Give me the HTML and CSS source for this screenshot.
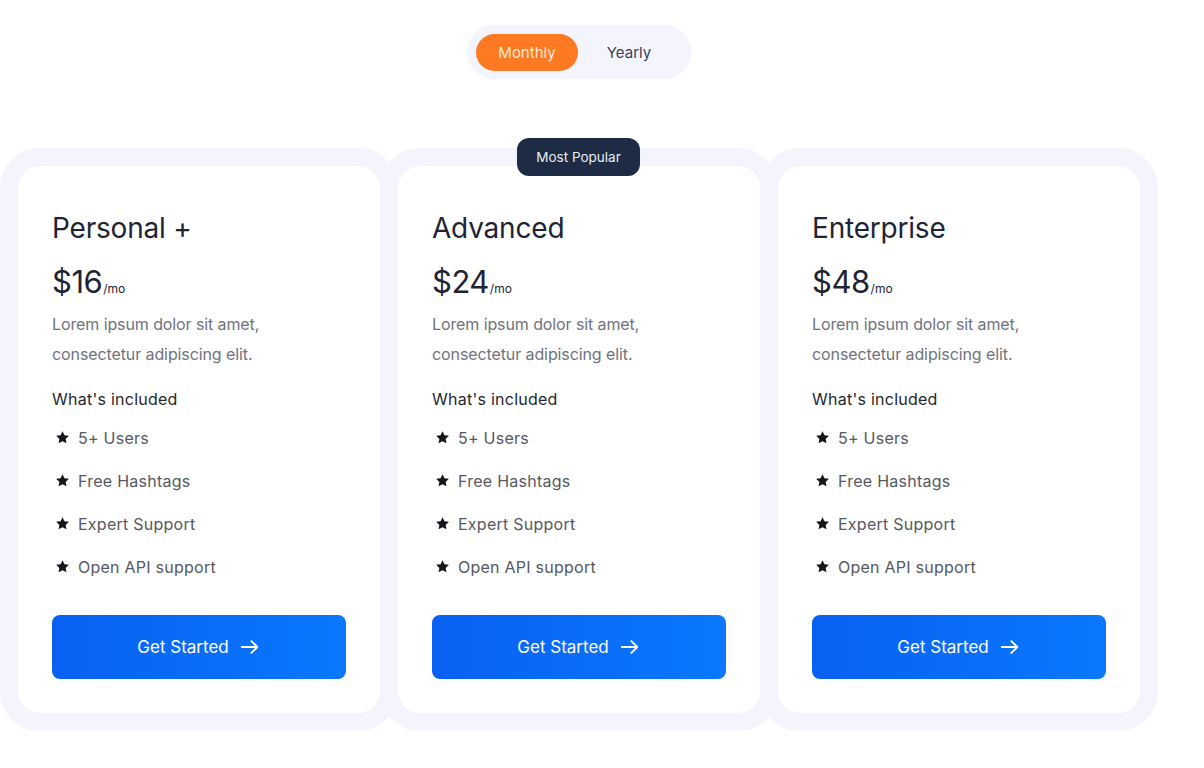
FILE: index.html
```html
<!DOCTYPE html>
<html>
<head>
<meta charset="utf-8">
<link rel="stylesheet" href="styles.css">
</head>
<body>
<div class="page">
  <div class="toggle-row">
    <div class="toggle">
      <button class="toggle-btn active">Monthly</button>
      <button class="toggle-btn">Yearly</button>
    </div>
  </div>
  <div class="cards">
    <div class="card">
      <h2 class="plan">Personal +</h2>
      <div class="price"><span class="amount">$16</span><span class="per">/mo</span></div>
      <p class="desc">Lorem ipsum dolor sit amet, consectetur adipiscing elit.</p>
      <h3 class="incl">What's included</h3>
      <ul class="features">
        <li><svg class="star" viewBox="0 0 24 24"><path d="M12 1.8l3.1 6.6 7.1.9-5.2 4.9 1.4 7.1L12 17.8l-6.4 3.5 1.4-7.1-5.2-4.9 7.1-.9z"/></svg>5+ Users</li>
        <li><svg class="star" viewBox="0 0 24 24"><path d="M12 1.8l3.1 6.6 7.1.9-5.2 4.9 1.4 7.1L12 17.8l-6.4 3.5 1.4-7.1-5.2-4.9 7.1-.9z"/></svg>Free Hashtags</li>
        <li><svg class="star" viewBox="0 0 24 24"><path d="M12 1.8l3.1 6.6 7.1.9-5.2 4.9 1.4 7.1L12 17.8l-6.4 3.5 1.4-7.1-5.2-4.9 7.1-.9z"/></svg>Expert Support</li>
        <li><svg class="star" viewBox="0 0 24 24"><path d="M12 1.8l3.1 6.6 7.1.9-5.2 4.9 1.4 7.1L12 17.8l-6.4 3.5 1.4-7.1-5.2-4.9 7.1-.9z"/></svg>Open API support</li>
      </ul>
      <button class="cta">Get Started<svg class="arrow" viewBox="0 0 24 24"><path d="M3 12h17M13.5 5.5L20 12l-6.5 6.5"/></svg></button>
    </div>
    <div class="card">
      <div class="badge">Most Popular</div>
      <h2 class="plan">Advanced</h2>
      <div class="price"><span class="amount">$24</span><span class="per">/mo</span></div>
      <p class="desc">Lorem ipsum dolor sit amet, consectetur adipiscing elit.</p>
      <h3 class="incl">What's included</h3>
      <ul class="features">
        <li><svg class="star" viewBox="0 0 24 24"><path d="M12 1.8l3.1 6.6 7.1.9-5.2 4.9 1.4 7.1L12 17.8l-6.4 3.5 1.4-7.1-5.2-4.9 7.1-.9z"/></svg>5+ Users</li>
        <li><svg class="star" viewBox="0 0 24 24"><path d="M12 1.8l3.1 6.6 7.1.9-5.2 4.9 1.4 7.1L12 17.8l-6.4 3.5 1.4-7.1-5.2-4.9 7.1-.9z"/></svg>Free Hashtags</li>
        <li><svg class="star" viewBox="0 0 24 24"><path d="M12 1.8l3.1 6.6 7.1.9-5.2 4.9 1.4 7.1L12 17.8l-6.4 3.5 1.4-7.1-5.2-4.9 7.1-.9z"/></svg>Expert Support</li>
        <li><svg class="star" viewBox="0 0 24 24"><path d="M12 1.8l3.1 6.6 7.1.9-5.2 4.9 1.4 7.1L12 17.8l-6.4 3.5 1.4-7.1-5.2-4.9 7.1-.9z"/></svg>Open API support</li>
      </ul>
      <button class="cta">Get Started<svg class="arrow" viewBox="0 0 24 24"><path d="M3 12h17M13.5 5.5L20 12l-6.5 6.5"/></svg></button>
    </div>
    <div class="card">
      <h2 class="plan">Enterprise</h2>
      <div class="price"><span class="amount">$48</span><span class="per">/mo</span></div>
      <p class="desc">Lorem ipsum dolor sit amet, consectetur adipiscing elit.</p>
      <h3 class="incl">What's included</h3>
      <ul class="features">
        <li><svg class="star" viewBox="0 0 24 24"><path d="M12 1.8l3.1 6.6 7.1.9-5.2 4.9 1.4 7.1L12 17.8l-6.4 3.5 1.4-7.1-5.2-4.9 7.1-.9z"/></svg>5+ Users</li>
        <li><svg class="star" viewBox="0 0 24 24"><path d="M12 1.8l3.1 6.6 7.1.9-5.2 4.9 1.4 7.1L12 17.8l-6.4 3.5 1.4-7.1-5.2-4.9 7.1-.9z"/></svg>Free Hashtags</li>
        <li><svg class="star" viewBox="0 0 24 24"><path d="M12 1.8l3.1 6.6 7.1.9-5.2 4.9 1.4 7.1L12 17.8l-6.4 3.5 1.4-7.1-5.2-4.9 7.1-.9z"/></svg>Expert Support</li>
        <li><svg class="star" viewBox="0 0 24 24"><path d="M12 1.8l3.1 6.6 7.1.9-5.2 4.9 1.4 7.1L12 17.8l-6.4 3.5 1.4-7.1-5.2-4.9 7.1-.9z"/></svg>Open API support</li>
      </ul>
      <button class="cta">Get Started<svg class="arrow" viewBox="0 0 24 24"><path d="M3 12h17M13.5 5.5L20 12l-6.5 6.5"/></svg></button>
    </div>
  </div>
</div>
</body>
</html>
```
FILE: styles.css
```css
* { box-sizing: border-box; }
body {
  margin: 0;
  background: #ffffff;
  font-family: Inter, "Liberation Sans", sans-serif;
  color: #1e2433;
}
.page {
  width: 1158px;
  padding-top: 25px;
}
.toggle-row {
  display: flex;
  justify-content: center;
}
.toggle {
  display: flex;
  align-items: center;
  width: 224px;
  height: 54px;
  padding: 0 9px;
  background: #f3f4fc;
  border-radius: 27px;
}
.toggle-btn {
  border: none;
  background: transparent;
  font-family: Inter, "Liberation Sans", sans-serif;
  font-size: 15px;
  color: #3d4255;
  height: 37px;
  width: 102px;
  border-radius: 19px;
  padding: 0;
  cursor: pointer;
}
.toggle-btn.active {
  background: #fd7a22;
  color: #fde9da;
}
.cards {
  display: flex;
  margin-top: 69px;
}
.card {
  position: relative;
  width: 398px;
  flex: none;
  background: #ffffff;
  border: 18px solid #f3f4fc;
  border-radius: 40px;
  padding: 44px 34px 34px;
  background-clip: padding-box;
}
.card + .card { margin-left: -18px; }
.badge {
  position: absolute;
  top: -28px;
  left: 119px;
  width: 123px;
  height: 38px;
  border-radius: 12px;
  background: #1d2b45;
  color: #e8ecf3;
  font-size: 13.5px;
  display: flex;
  align-items: center;
  justify-content: center;
}
.plan {
  margin: 0;
  font-weight: 400;
  font-size: 28px;
  line-height: 36px;
  color: #1e2433;
  letter-spacing: -0.2px;
}
.price {
  margin-top: 17px;
  display: flex;
  align-items: baseline;
  color: #1e2433;
}
.amount {
  font-size: 31px;
  line-height: 38px;
  letter-spacing: -0.5px;
}
.per {
  font-size: 12px;
  margin-left: 1px;
}
.desc {
  margin: 8px 0 0;
  font-size: 16px;
  line-height: 30px;
  color: #70737d;
  letter-spacing: -0.1px;
}
.incl {
  margin: 18px 0 0;
  font-size: 16px;
  font-weight: 400;
  line-height: 24px;
  color: #24272f;
  letter-spacing: 0.25px;
}
.features {
  list-style: none;
  margin: 5px 0 0;
  padding: 0;
}
.features li {
  display: flex;
  align-items: center;
  height: 43px;
  font-size: 16px;
  color: #555861;
  letter-spacing: 0.25px;
}
.star {
  width: 15px;
  height: 15px;
  fill: #15171c;
  margin: 0 8px 0 3px;
}
.cta {
  margin-top: 27px;
  width: 100%;
  height: 64px;
  border: none;
  border-radius: 8px;
  background: linear-gradient(90deg, #0861f2 0%, #0a78ff 100%);
  color: #ffffff;
  font-family: Inter, "Liberation Sans", sans-serif;
  font-size: 17px;
  display: flex;
  align-items: center;
  justify-content: center;
  gap: 10px;
  cursor: pointer;
}
.arrow {
  width: 22px;
  height: 22px;
  fill: none;
  stroke: #ffffff;
  stroke-width: 2;
  stroke-linecap: round;
  stroke-linejoin: round;
}
```
